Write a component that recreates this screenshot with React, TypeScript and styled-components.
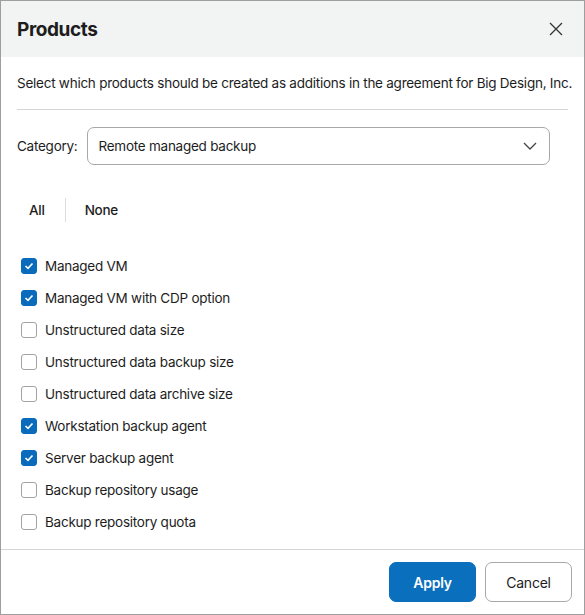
import { useState } from "react";
import styled, { createGlobalStyle } from "styled-components";

const GlobalStyle = createGlobalStyle`
  html, body {
    margin: 0;
    padding: 0;
    background: #fff;
  }
  * {
    box-sizing: border-box;
  }
  body {
    font-family: Inter, "Noto Sans", sans-serif;
    color: #1d1d1d;
    font-size: 13.5px;
    letter-spacing: -0.25px;
  }
`;

const Dialog = styled.div`
  width: 585px;
  height: 615px;
  border: 1px solid #9e9e9e;
  display: flex;
  flex-direction: column;
  background: #fff;
  overflow: hidden;
`;

const Header = styled.div`
  flex-shrink: 0;
  height: 56px;
  background: #f2f3f3;
  display: flex;
  align-items: center;
  justify-content: space-between;
  padding: 0 16px;
`;

const Title = styled.h1`
  margin: 0;
  font-size: 19px;
  font-weight: 700;
  color: #1d1d1d;
  letter-spacing: -0.4px;
`;

const CloseButton = styled.button`
  width: 24px;
  height: 24px;
  border: none;
  background: none;
  padding: 0;
  display: flex;
  align-items: center;
  justify-content: center;
  cursor: pointer;
  color: #333;
`;

const Body = styled.div`
  flex: 1;
  min-height: 0;
  padding: 0 16px;
  display: flex;
  flex-direction: column;
`;

const Description = styled.p`
  margin: 0;
  padding: 17px 0 17px;
  font-size: 13.5px;
  line-height: 18px;
  color: #1d1d1d;
  border-bottom: 1px solid #d4d4d4;
  white-space: nowrap;
`;

const CategoryRow = styled.div`
  display: flex;
  align-items: center;
  gap: 9px;
  margin-top: 17px;
`;

const Label = styled.span`
  font-size: 13.5px;
  color: #1d1d1d;
`;

const Select = styled.button`
  flex: 1;
  height: 38px;
  margin-right: 18px;
  border: 1px solid #a8a8a8;
  border-radius: 7px;
  background: #fff;
  display: flex;
  align-items: center;
  justify-content: space-between;
  padding: 0 12px 0 11px;
  font-family: inherit;
  font-size: 13.5px;
  letter-spacing: inherit;
  color: #1d1d1d;
  cursor: pointer;
`;

const Toggles = styled.div`
  display: flex;
  align-items: center;
  margin-top: 33px;
  margin-left: 12px;
  height: 24px;
`;

const ToggleLink = styled.button`
  border: none;
  background: none;
  padding: 0;
  font-family: inherit;
  font-size: 13.5px;
  font-weight: 500;
  letter-spacing: inherit;
  color: #1d1d1d;
  cursor: pointer;
`;

const Separator = styled.span`
  width: 1px;
  height: 24px;
  background: #dcdcdc;
  margin: 0 19px 0 20px;
`;

const List = styled.div`
  display: flex;
  flex-direction: column;
  margin-top: 28px;
  margin-left: 4px;
`;

const Item = styled.label`
  display: flex;
  align-items: center;
  gap: 8px;
  height: 32px;
  font-size: 13.5px;
  color: #1d1d1d;
  cursor: pointer;
`;

const Box = styled.span<{ $checked: boolean }>`
  width: 16px;
  height: 16px;
  border-radius: 3px;
  border: 1px solid ${({ $checked }) => ($checked ? "#0a6bbd" : "#a3a3a3")};
  background: ${({ $checked }) => ($checked ? "#0a6bbd" : "#fff")};
  display: flex;
  align-items: center;
  justify-content: center;
  flex-shrink: 0;
`;

const Footer = styled.div`
  flex-shrink: 0;
  height: 65px;
  border-top: 1px solid #d4d4d4;
  display: flex;
  align-items: center;
  justify-content: flex-end;
  gap: 9px;
  padding: 0 12px 0 0;
`;

const FooterButton = styled.button<{ $primary?: boolean }>`
  width: 87px;
  height: 40px;
  border-radius: 7px;
  font-family: inherit;
  font-size: 14px;
  letter-spacing: inherit;
  font-weight: ${({ $primary }) => ($primary ? 600 : 400)};
  border: 1px solid ${({ $primary }) => ($primary ? "#0a6fbd" : "#a8a8a8")};
  background: ${({ $primary }) => ($primary ? "#0a6fbd" : "#fff")};
  color: ${({ $primary }) => ($primary ? "#fff" : "#1d1d1d")};
  cursor: pointer;
`;

const products = [
  { name: "Managed VM", checked: true },
  { name: "Managed VM with CDP option", checked: true },
  { name: "Unstructured data size", checked: false },
  { name: "Unstructured data backup size", checked: false },
  { name: "Unstructured data archive size", checked: false },
  { name: "Workstation backup agent", checked: true },
  { name: "Server backup agent", checked: true },
  { name: "Backup repository usage", checked: false },
  { name: "Backup repository quota", checked: false },
];

export default function App() {
  const [checked, setChecked] = useState(products.map((p) => p.checked));

  const toggle = (i: number) =>
    setChecked((prev) => prev.map((c, j) => (j === i ? !c : c)));

  return (
    <>
      <GlobalStyle />
      <Dialog>
        <Header>
          <Title>Products</Title>
          <CloseButton aria-label="Close">
            <svg width="14" height="14" viewBox="0 0 14 14">
              <path d="M1 1 L13 13 M13 1 L1 13" stroke="#333" strokeWidth="1.3" fill="none" />
            </svg>
          </CloseButton>
        </Header>
        <Body>
          <Description>
            Select which products should be created as additions in the agreement for Big Design, Inc.
          </Description>
          <CategoryRow>
            <Label>Category:</Label>
            <Select>
              <span>Remote managed backup</span>
              <svg width="14" height="8" viewBox="0 0 14 8">
                <path d="M1 1 L7 7 L13 1" stroke="#444" strokeWidth="1.3" fill="none" />
              </svg>
            </Select>
          </CategoryRow>
          <Toggles>
            <ToggleLink onClick={() => setChecked(products.map(() => true))}>All</ToggleLink>
            <Separator />
            <ToggleLink onClick={() => setChecked(products.map(() => false))}>None</ToggleLink>
          </Toggles>
          <List>
            {products.map((p, i) => (
              <Item key={p.name} onClick={() => toggle(i)}>
                <Box $checked={checked[i]}>
                  {checked[i] && (
                    <svg width="10" height="8" viewBox="0 0 10 8">
                      <path d="M1.5 4 L4 6.3 L8.5 1.5" stroke="#fff" strokeWidth="1.6" fill="none" />
                    </svg>
                  )}
                </Box>
                {p.name}
              </Item>
            ))}
          </List>
        </Body>
        <Footer>
          <FooterButton $primary>Apply</FooterButton>
          <FooterButton>Cancel</FooterButton>
        </Footer>
      </Dialog>
    </>
  );
}
